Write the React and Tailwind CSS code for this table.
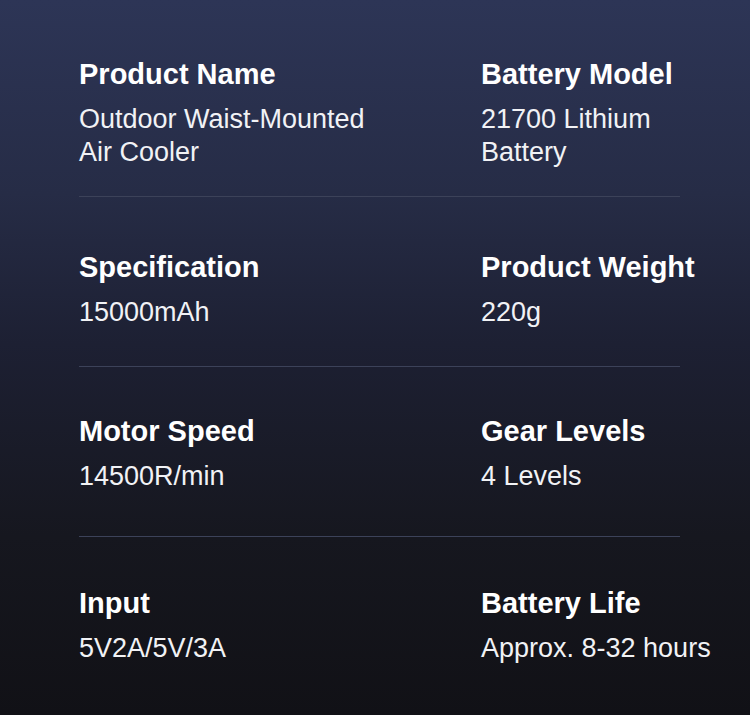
const specs = [
  {
    left: { label: "Product Name", value: ["Outdoor Waist-Mounted", "Air Cooler"] },
    right: { label: "Battery Model", value: ["21700 Lithium", "Battery"] },
    row: "pt-[57px] pb-[27px] border-b",
  },
  {
    left: { label: "Specification", value: ["15000mAh"] },
    right: { label: "Product Weight", value: ["220g"] },
    row: "pt-[53px] pb-[37px] border-b",
  },
  {
    left: { label: "Motor Speed", value: ["14500R/min"] },
    right: { label: "Gear Levels", value: ["4 Levels"] },
    row: "pt-[47px] pb-[43px] border-b",
  },
  {
    left: { label: "Input", value: ["5V2A/5V/3A"] },
    right: { label: "Battery Life", value: ["Approx. 8-32 hours"] },
    row: "pt-[49px] pb-[47px]",
  },
];

function Spec({ label, value }) {
  return (
    <div className="whitespace-nowrap">
      <div className="text-[29px] leading-[35px] font-bold text-white">{label}</div>
      <div className="mt-[11px] text-[27px] leading-[33px] text-[#f1f2f5]">
        {value.map((line) => (
          <div key={line}>{line}</div>
        ))}
      </div>
    </div>
  );
}

export default function App() {
  return (
    <div
      className="w-[750px] h-[715px] overflow-hidden bg-[linear-gradient(180deg,#2d3556_0%,#262c46_27%,#1d2033_48%,#16171f_75%,#111116_100%)]"
      style={{ fontFamily: '"Liberation Sans", Arial, sans-serif' }}
    >
      <div className="ml-[79px] w-[601px]">
        {specs.map((s) => (
          <div
            key={s.left.label}
            className={`grid grid-cols-[402px_1fr] border-[#3c4259] ${s.row}`}
          >
            <Spec {...s.left} />
            <Spec {...s.right} />
          </div>
        ))}
      </div>
    </div>
  );
}
